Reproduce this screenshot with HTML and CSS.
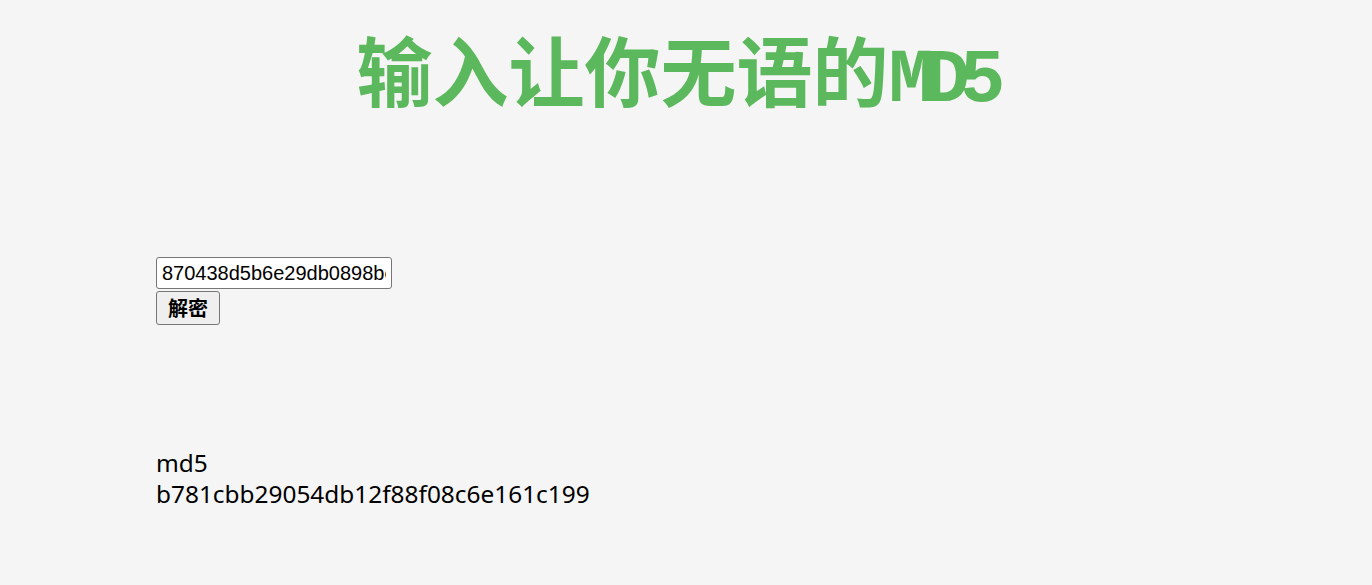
FILE: index.html
```html
<!DOCTYPE html>
<html lang="zh">
<head>
<meta charset="utf-8">
<title>输入让你无语的MD5</title>
<link rel="stylesheet" href="styles.css">
</head>
<body>
<h1 class="title">输入让你无语的<span class="latin">MD5</span></h1>
<div class="content">
  <form class="form">
    <input class="field" type="text" value="870438d5b6e29db0898bc4f0225935c0">
    <button class="btn" type="button">解密</button>
  </form>
  <div class="result">
    <div>md5</div>
    <div>b781cbb29054db12f88f08c6e161c199</div>
  </div>
</div>
</body>
</html>
```
FILE: styles.css
```css
html, body {
  margin: 0;
  padding: 0;
  background: #f5f5f5;
}
body {
  font-family: "Noto Sans", "Noto Sans CJK SC", sans-serif;
  color: #000;
}
.title {
  margin: 0;
  padding-top: 18px;
  padding-right: 20px;
  text-align: center;
  color: #5cb85c;
  font-family: "Noto Sans CJK SC", sans-serif;
  font-size: 76px;
  font-weight: 700;
  line-height: 100px;
}
.latin {
  font-family: "Liberation Mono", monospace;
  letter-spacing: -10px;
}
.content {
  padding-left: 156px;
}
.form {
  display: flex;
  flex-direction: column;
  align-items: flex-start;
  margin-top: 126px;
}
.field {
  width: 236px;
  height: 32px;
  box-sizing: border-box;
  padding: 1px 5px;
  font-family: "Liberation Sans", Arial, sans-serif;
  font-size: 20px;
  border: 1px solid #767676;
  border-radius: 3px;
  background: #fff;
  margin: 0;
}
.btn {
  margin-top: 2px;
  height: 34px;
  width: 64px;
  box-sizing: border-box;
  font-family: "Noto Sans CJK SC", sans-serif;
  font-size: 20px;
  font-weight: 700;
  line-height: 1;
  border: 1px solid #767676;
  border-radius: 3px;
  background: #efefef;
  padding: 0;
}
.result {
  margin-top: 122px;
  font-size: 24.4px;
  line-height: 31px;
}
```
